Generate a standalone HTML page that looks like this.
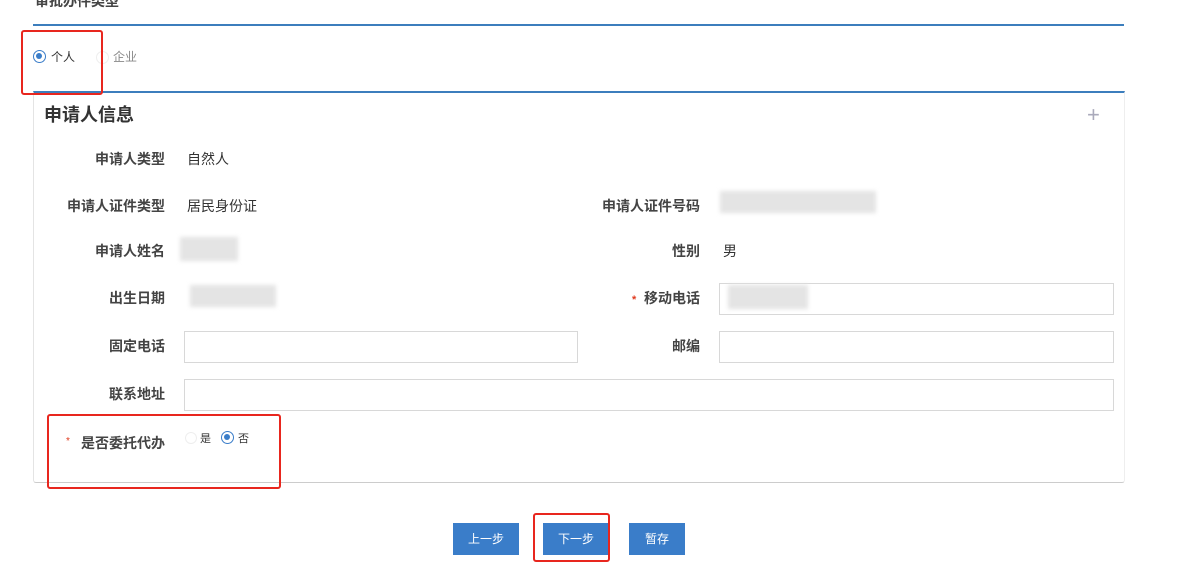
<!DOCTYPE html>
<html><head><meta charset="utf-8"><style>
body{margin:0;width:1200px;height:573px;background:#fff;position:relative;overflow:hidden;font-family:"Liberation Sans","Noto Sans CJK SC",sans-serif;font-size:14px;color:#333}
.a{position:absolute}
.lbl{position:absolute;font-weight:bold;color:#444;text-align:right;width:160px;font-size:14px}
.inp{position:absolute;border:1px solid #d8d8d8;background:#fff;box-sizing:border-box;height:32px}
.btn{position:absolute;background:#3a7dc9;color:#fff;font-size:12px;text-align:center;line-height:32px;height:32px}
.red{position:absolute;border:2px solid #e8261e;border-radius:3px;box-sizing:border-box}
.blur{position:absolute;background:#e4e4e4;filter:blur(2px)}
.rad{position:absolute;width:10px;height:10px;border-radius:50%;border:1px solid #3a7dc9;box-sizing:border-box}
.rad.on::after{content:"";position:absolute;left:2px;top:2px;width:6px;height:6px;border-radius:50%;background:#3a7dc9}
</style></head><body>
<div class="a" style="left:35px;top:-9px;font-weight:bold;color:#444;font-size:14px">审批办件类型</div>
<div class="a" style="left:33px;top:24px;width:1091px;height:2px;background:#3c7ebd"></div>
<div class="rad on" style="left:33px;top:50px;width:13px;height:13px"></div>
<div class="a" style="left:51px;top:48px;font-size:12px">个人</div>
<div class="a" style="left:96px;top:51px;width:11px;height:11px;border-radius:50%;border:1px solid #eee"></div>
<div class="a" style="left:113px;top:48px;font-size:12px;color:#888">企业</div>

<div class="a" style="left:33px;top:91px;width:1092px;height:392px;border-left:1px solid #e4e4e4;border-right:1px solid #eee;border-bottom:1px solid #ccc;border-top:2px solid #3c7ebd;box-sizing:border-box;border-radius:0 0 3px 3px"></div>
<div class="a" style="left:44px;top:101px;font-size:18px;font-weight:bold;color:#333">申请人信息</div>
<div class="a" style="left:1087px;top:102px;font-size:22px;color:#aab;font-weight:100">+</div>

<div class="lbl" style="left:5px;top:149px">申请人类型</div><div class="a" style="left:187px;top:149px">自然人</div>
<div class="lbl" style="left:5px;top:196px">申请人证件类型</div><div class="a" style="left:187px;top:196px">居民身份证</div>
<div class="lbl" style="left:540px;top:196px">申请人证件号码</div><div class="blur" style="left:720px;top:191px;width:156px;height:22px"></div>
<div class="lbl" style="left:5px;top:241px">申请人姓名</div><div class="blur" style="left:180px;top:237px;width:58px;height:24px"></div>
<div class="lbl" style="left:540px;top:241px">性别</div><div class="a" style="left:723px;top:241px">男</div>
<div class="lbl" style="left:5px;top:288px">出生日期</div><div class="blur" style="left:190px;top:285px;width:86px;height:22px"></div>
<div class="lbl" style="left:540px;top:288px"><span style="color:#e03a1e;font-size:11px">*</span>&nbsp;&nbsp;移动电话</div>
<div class="inp" style="left:719px;top:283px;width:395px"></div><div class="blur" style="left:728px;top:285px;width:80px;height:24px"></div>
<div class="lbl" style="left:5px;top:336px">固定电话</div><div class="inp" style="left:184px;top:331px;width:394px"></div>
<div class="lbl" style="left:540px;top:336px">邮编</div><div class="inp" style="left:719px;top:331px;width:395px"></div>
<div class="lbl" style="left:5px;top:384px">联系地址</div><div class="inp" style="left:184px;top:379px;width:930px"></div>
<div class="a" style="left:66px;top:436px;color:#e03a1e;font-size:10px">*</div>
<div class="lbl" style="left:5px;top:433px">是否委托代办</div>
<div class="a" style="left:185px;top:432px;width:10px;height:10px;border-radius:50%;border:1px solid #eee"></div>
<div class="a" style="left:200px;top:430px;font-size:11px">是</div>
<div class="rad on" style="left:221px;top:431px;width:13px;height:13px"></div>
<div class="a" style="left:238px;top:430px;font-size:11px">否</div>

<div class="btn" style="left:453px;top:523px;width:66px">上一步</div>
<div class="btn" style="left:543px;top:523px;width:66px">下一步</div>
<div class="btn" style="left:629px;top:523px;width:56px">暂存</div>

<div class="red" style="left:21px;top:30px;width:82px;height:65px"></div>
<div class="red" style="left:47px;top:414px;width:234px;height:75px"></div>
<div class="red" style="left:533px;top:513px;width:77px;height:49px"></div>
</body></html>
